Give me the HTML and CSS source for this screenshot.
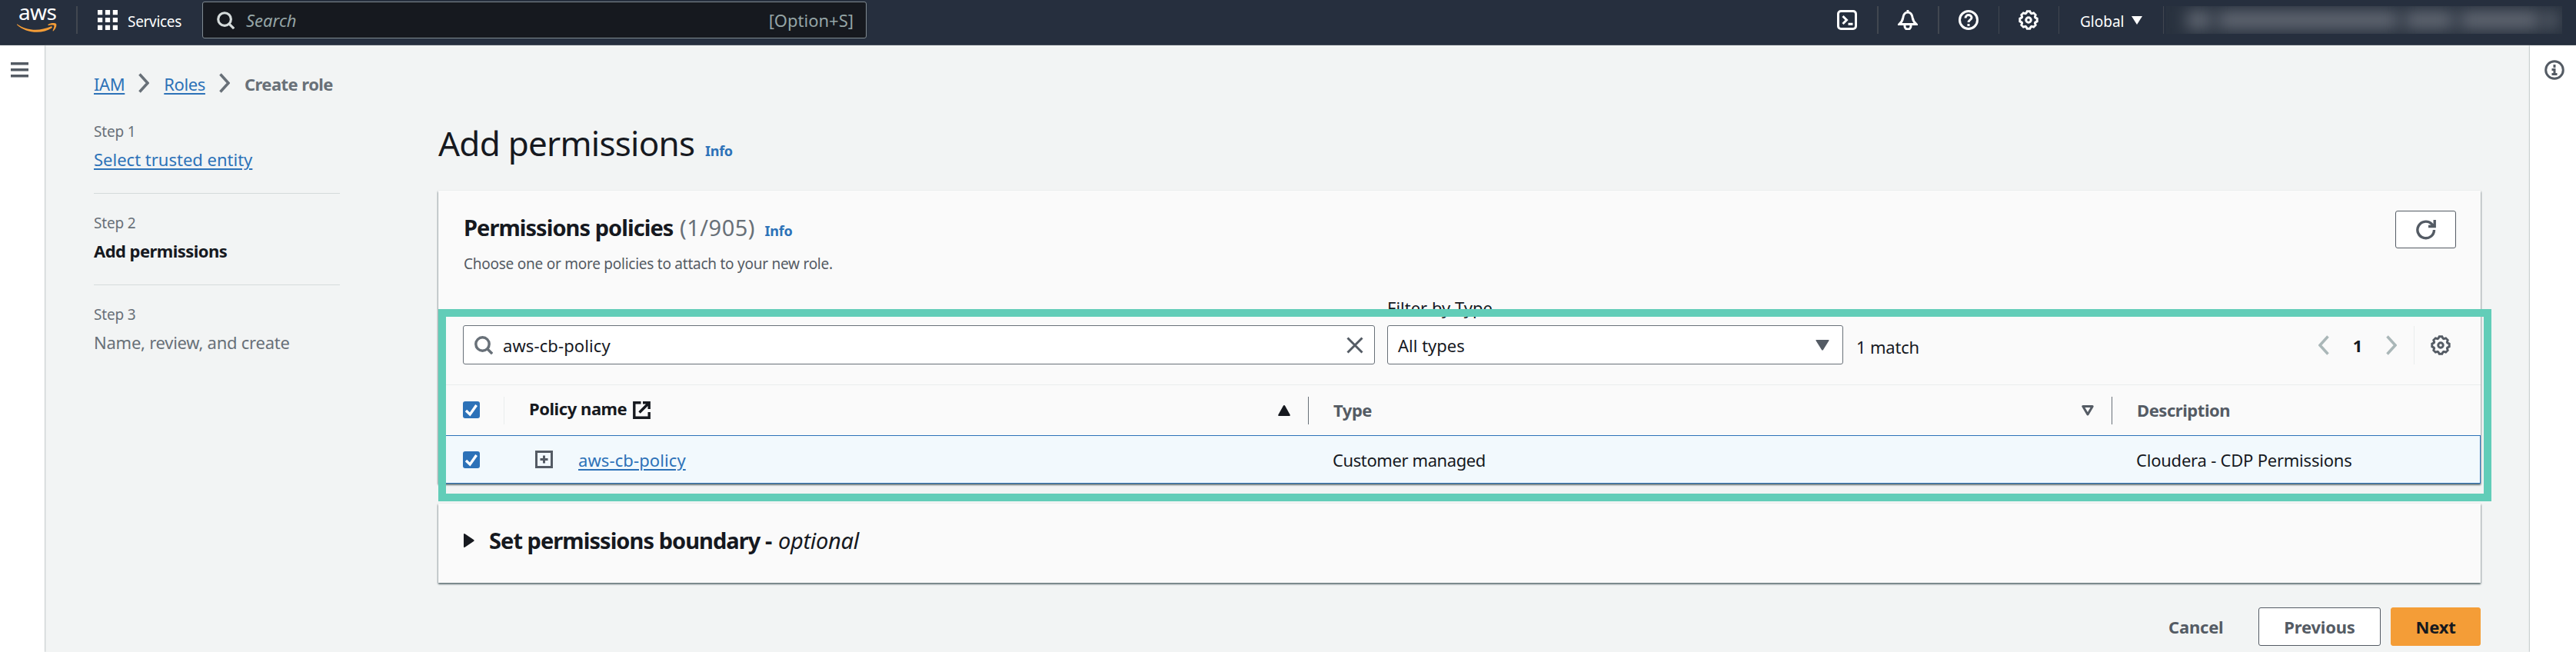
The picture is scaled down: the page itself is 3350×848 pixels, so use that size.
FILE: index.html
```html
<!DOCTYPE html>
<html lang="en">
<head>
    <meta charset="UTF-8">
    <meta name="viewport" content="width=device-width, initial-scale=1.0">
    <title>Create role | IAM</title>
    <link rel="stylesheet" href="styles.css">
</head>
<body>
    <!-- Shared icons -->
    <svg class="sprite" aria-hidden="true">
        <symbol id="gear" viewBox="-8 -8 16 16">
            <path d="M6.9-1.1v2.2L5.4 1.9l-.24.57.5 1.63L4.1 5.66l-1.63-.5-.57.24L1.1 6.9h-2.2l-.8-1.5-.57-.24-1.63.5L-5.66 4.1l.5-1.63L-5.4 1.9l-1.5-.8v-2.2l1.5-.8.24-.57-.5-1.63L-4.1-5.66l1.63.5.57-.24.8-1.5h2.2l.8 1.5.57.24 1.63-.5L5.66-4.1l-.5 1.63.24.57z"/>
            <circle r="2"/>
        </symbol>
        <symbol id="search" viewBox="0 0 16 16">
            <circle cx="7" cy="7" r="5.8"/>
            <path d="M11 11l4.4 4.4"/>
        </symbol>
        <symbol id="chevron" viewBox="0 0 14 26">
            <path d="M1.5 1.5L12 13 1.5 24.5"/>
        </symbol>
        <symbol id="check" viewBox="0 0 22 22">
            <path d="M4 12l5.2 5L17.6 5"/>
        </symbol>
    </svg>

    <header class="topbar">
        <div class="logo">
            <span class="logo-text">aws</span>
            <svg class="logo-smile" viewBox="0 0 52 12">
                <path d="M0 1.2c14 9.5 30 9.300 44 3.300 1.500-.6 2.600 1 1.200 2C33 14.500 12 13.500 0 2.200z"/>
                <path d="M40.500 2c3-2.200 9-2.500 10.500-1 1.200 1.500-.5 7-3.500 9.200-.8.500-1.100 0-.8-.8 1-2.600 2.200-5.400 1.500-6.200-.8-.9-4-.6-7-.2-.9.100-1.300-.5-.7-1z"/>
            </svg>
        </div>
        <span class="divider thick"></span>
        <div class="services">
            <svg class="icon grid-icon" viewBox="0 0 25 25">
                <path d="M0 0h6v6H0zM9.500 0h6v6h-6zM19 0h6v6h-6zM0 9.500h6v6H0zM9.500 9.500h6v6h-6zM19 9.500h6v6h-6zM0 19h6v6H0zM9.500 19h6v6h-6zM19 19h6v6h-6z"/>
            </svg>
            <span>Services</span>
        </div>
        <div class="global-search">
            <svg class="icon line"><use href="#search"/></svg>
            <span class="placeholder">Search</span>
            <span>[Option+S]</span>
        </div>
        <nav class="tools">
            <svg class="icon line" viewBox="0 0 26 26">
                <rect x="1.5" y="1.5" width="23" height="23" rx="3.5"/>
                <path d="M7.500 8l5 5-5 5M14.500 18.200h6"/>
            </svg>
            <span class="divider thick"></span>
            <svg class="icon line" viewBox="0 0 26 26">
                <path d="M13 0v3M2 18.500h22c-3-2.500-4.200-4.500-4.800-8.500C18.700 5.600 16 3 13 3s-5.700 2.600-6.200 7C6.200 14 5 16 2 18.500zM9 19v2a4 4 0 0 0 8 0v-2"/>
            </svg>
            <span class="divider thick"></span>
            <svg class="icon line" viewBox="0 0 26 26">
                <circle cx="13" cy="13" r="11.5"/>
                <path d="M9 10.500c0-5.200 8-5 8-.5 0 3-4 2.800-4 6M13 18v3"/>
            </svg>
            <span class="divider"></span>
            <svg class="icon line gear"><use href="#gear"/></svg>
            <span class="divider"></span>
            <div class="region"><span>Global</span> <svg viewBox="0 0 14 11"><path d="M0 0h14L7 11z"/></svg></div>
            <span class="divider"></span>
            <div class="account">
                <i class="w1"></i><i class="w2"></i><i class="w3"></i><i class="w4"></i><i class="w5"></i>
            </div>
        </nav>
    </header>

    <div class="layout">
        <aside class="panel left">
            <svg class="menu-icon" viewBox="0 0 23 20"><path d="M0 1.700h23M0 9.700h23M0 17.700h23"/></svg>
        </aside>

        <main>
            <nav class="breadcrumbs">
                <a>IAM</a>
                <svg><use href="#chevron"/></svg>
                <a>Roles</a>
                <svg><use href="#chevron"/></svg>
                <b>Create role</b>
            </nav>

            <div class="wizard">
                <ol class="steps">
                    <li>
                        <small>Step 1</small>
                        <a>Select trusted entity</a>
                    </li>
                    <li>
                        <small>Step 2</small>
                        <b>Add permissions</b>
                    </li>
                    <li>
                        <small>Step 3</small>
                        <span class="upcoming">Name, review, and create</span>
                    </li>
                </ol>

                <div class="content">
                    <h1>Add permissions <a class="info">Info</a></h1>

                    <section class="card">
                        <div class="card-header">
                            <div>
                                <h2>Permissions policies <span class="counter">(1/905)</span> <a class="info">Info</a></h2>
                                <p>Choose one or more policies to attach to your new role.</p>
                            </div>
                            <button class="btn refresh">
                                <svg viewBox="0 0 26 26"><path d="M23.500 13A10.800 10.800 0 1 1 20 5l3 3.500M24.200 0v8.500H16"/></svg>
                            </button>
                        </div>

                        <div class="toolbar">
                            <div class="field filter">
                                <svg class="icon line"><use href="#search"/></svg>
                                <span>aws-cb-policy</span>
                                <svg class="clear" viewBox="0 0 22 22"><path d="M1.500 1.500l19 19M20.500 1.500l-19 19"/></svg>
                            </div>
                            <div class="select">
                                <label>Filter by Type</label>
                                <div class="field">
                                    <span>All types</span>
                                    <svg viewBox="0 0 18 14"><path d="M1 0h16q1 0 .5 1L10 13q-1 1.500-2 0L.5 1Q0 0 1 0z"/></svg>
                                </div>
                            </div>
                            <span class="matches">1 match</span>
                            <div class="pages">
                                <svg class="prev"><use href="#chevron"/></svg>
                                <b>1</b>
                                <svg><use href="#chevron"/></svg>
                            </div>
                            <span class="rule"></span>
                            <svg class="icon line gear"><use href="#gear"/></svg>
                        </div>

                        <div class="row head">
                            <div class="cell pick"><span class="checkbox"><svg><use href="#check"/></svg></span></div>
                            <div class="cell name">
                                <span>Policy name</span>
                                <svg class="external" viewBox="0 0 23 23"><path d="M10.500 1.800H1.800v19.400h19.400V14M8.500 14.500L20.500 2.500M13 1.800h8.200V10"/></svg>
                                <svg class="sort" viewBox="0 0 16 14"><path d="M8 0q.8 0 1.300 1l6.400 11.500q.5 1.500-.9 1.500H1.200q-1.400 0-.9-1.500L6.700 1Q7.200 0 8 0z"/></svg>
                            </div>
                            <div class="cell type">
                                <span>Type</span>
                                <svg class="sort open" viewBox="0 0 16 14"><path d="M1.800 1.500h12.400L8 12z"/></svg>
                            </div>
                            <div class="cell"><span>Description</span></div>
                        </div>
                        <div class="row selected">
                            <div class="cell pick"><span class="checkbox"><svg><use href="#check"/></svg></span></div>
                            <div class="cell name">
                                <svg class="expand" viewBox="0 0 23 23"><path d="M1.500 1.500h20v20h-20zM11.500 6.500v10M6.500 11.500h10"/></svg>
                                <a>aws-cb-policy</a>
                            </div>
                            <div class="cell type">Customer managed</div>
                            <div class="cell description">Cloudera - CDP Permissions</div>
                        </div>
                    </section>

                    <section class="card boundary">
                        <svg viewBox="0 0 14 18"><path d="M0 1q0-1.500 1.500-.7L13 8q1.300 1 0 2L1.500 17.700Q0 18.500 0 17z"/></svg>
                        <h2>Set permissions boundary - <em>optional</em></h2>
                    </section>

                    <div class="actions">
                        <button class="btn plain">Cancel</button>
                        <button class="btn">Previous</button>
                        <button class="btn primary">Next</button>
                    </div>

                    <div class="highlight"></div>
                </div>
            </div>
        </main>

        <aside class="panel right">
            <svg class="info-icon" viewBox="0 0 26 26">
                <circle cx="13" cy="13" r="11.3"/>
                <path d="M13 6v4M9.500 12.500H13v6M9.500 18.500h7"/>
            </svg>
        </aside>
    </div>
</body>
</html>
```

FILE: styles.css
```css
* {
    box-sizing: border-box;
}
body {
    margin: 0;
    height: 848px;
    overflow: hidden;
    background: #f2f4f4;
    color: #16191f;
    font-family: "Noto Sans", "Open Sans", sans-serif;
    font-size: 22px;
    line-height: 30px;
}
h1, h2, p, ol {
    margin: 0;
    padding: 0;
}
a {
    color: #2d72b8;
    text-decoration: underline;
    text-decoration-thickness: 2px;
    text-underline-offset: 3px;
}
svg {
    display: block;
    flex: none;
    fill: currentColor;
}
.sprite {
    position: absolute;
    width: 0;
    height: 0;
}
.icon {
    width: 26px;
    height: 26px;
}
.line {
    fill: none;
    stroke: currentColor;
    stroke-width: 3;
}
.line.gear {
    stroke-width: 1.8;
}

/* Top bar */
.topbar {
    display: flex;
    align-items: flex-start;
    height: 59px;
    background: #262f3e;
    border-bottom: 1px solid #48505b;
    color: #fff;
    font-size: 19px;
}
.divider {
    width: 1px;
    height: 36px;
    margin-top: 8px;
    background: #414750;
}
.divider.thick {
    width: 2px;
}
.logo {
    width: 77px;
    height: 44px;
    padding-left: 22px;
    margin-right: 22px;
}
.logo-text {
    display: block;
    height: 30px;
    padding-left: 2px;
    font-size: 28px;
    line-height: 31px;
    letter-spacing: -0.6px;
}
.logo-smile {
    width: 52px;
    height: 12px;
    color: #f49d37;
}
.services {
    display: flex;
    align-items: center;
    height: 52px;
    width: 162px;
    padding-left: 26px;
    gap: 13px;
    letter-spacing: -0.3px;
}
.services span, .region span {
    padding-top: 3px;
}
.global-search {
    display: flex;
    align-items: center;
    width: 864px;
    height: 48px;
    margin-top: 2px;
    padding: 0 16px 0 18px;
    background: #16191f;
    border: 1px solid #7f8a91;
    border-radius: 3px;
    color: #95a5a6;
    font-size: 22px;
}
.global-search .icon {
    width: 23px;
    height: 23px;
    margin-right: 15px;
    color: #d5dbdb;
    stroke-width: 2.2;
}
.placeholder {
    flex: 1;
    font-style: italic;
}
.tools {
    display: flex;
    margin-left: auto;
    margin-right: 18px;
}
.tools .icon {
    margin: 13px 26px 0 25px;
}
.region {
    display: flex;
    align-items: center;
    height: 52px;
    width: 135px;
    padding-left: 27px;
    gap: 10px;
}
.region svg {
    width: 14px;
    height: 11px;
}
.account {
    display: flex;
    align-items: center;
    gap: 8px;
    width: 515px;
    height: 36px;
    margin: 8px 0 0 3px;
    padding-left: 27px;
    background: #29323f;
    overflow: hidden;
}
.account i {
    height: 22px;
    background: #656b76;
    filter: blur(10px);
}
.w1 { width: 32px; }
.w2 { width: 235px; }
.w3 { width: 64px; }
.w4 { width: 104px; }
.w5 { width: 14px; }

/* Page frame */
.layout {
    display: flex;
    height: 789px;
}
.panel {
    width: 58px;
    background: #fff;
    color: #545b64;
    box-shadow: 0 0 2px rgba(0, 28, 36, 0.5);
}
.panel.right {
    width: 60px;
    padding: 19px 0 0 19px;
}
.panel.left {
    padding: 22px 0 0 14px;
}
.menu-icon {
    width: 23px;
    height: 20px;
    stroke: currentColor;
    stroke-width: 3.4;
}
.info-icon {
    width: 26px;
    height: 26px;
    fill: none;
    stroke: currentColor;
    stroke-width: 3;
}
main {
    flex: 1;
    padding: 35px 64px 0;
}
.breadcrumbs {
    display: flex;
    height: 30px;
    color: #687078;
}
.breadcrumbs a {
    letter-spacing: -0.4px;
}
.breadcrumbs svg, .pages svg {
    width: 14px;
    height: 26px;
    fill: none;
    stroke: currentColor;
    stroke-width: 3.5;
}
.breadcrumbs svg {
    margin: 1px 19px 0 18px;
}
.breadcrumbs b {
    letter-spacing: -0.55px;
}
.wizard {
    display: flex;
    gap: 128px;
}
.steps {
    width: 320px;
    padding-top: 34px;
    list-style: none;
    color: #687078;
}
.steps li {
    display: flex;
    flex-direction: column;
    align-items: flex-start;
    height: 94px;
    margin-bottom: 25px;
    border-bottom: 1px solid #d5dbdb;
}
.steps li:last-child {
    border: 0;
}
.steps b {
    color: #16191f;
    letter-spacing: -0.55px;
}
.upcoming {
    letter-spacing: -0.25px;
}
small {
    margin-bottom: 8px;
    font-size: 19px;
    line-height: 26px;
    letter-spacing: -0.2px;
}

/* Content */
.content {
    position: relative;
    flex: 1;
    padding-top: 32px;
}
h1 {
    height: 60px;
    margin-bottom: 32px;
    font-size: 44px;
    font-weight: 400;
    line-height: 60px;
    letter-spacing: -0.75px;
}
.info {
    margin-left: 3px;
    font-size: 18px;
    font-weight: 700;
    letter-spacing: -0.3px;
    text-decoration: none;
}
.card {
    background: #fafafa;
    box-shadow: 0 2px 2px rgba(0, 28, 36, 0.45), 1px 1px 2px rgba(0, 28, 36, 0.2), -1px 1px 2px rgba(0, 28, 36, 0.2);
}
.card-header {
    display: flex;
    justify-content: space-between;
    height: 108px;
    padding: 26px 32px 0 33px;
}
h2 {
    height: 40px;
    margin: 2px 0 14px;
    font-size: 29px;
    line-height: 40px;
    letter-spacing: -0.95px;
}
.counter {
    margin-left: 2px;
    font-weight: 400;
    letter-spacing: 0.5px;
    color: #687078;
}
h2 .info {
    margin-left: 6px;
}
.card-header p {
    color: #545b64;
    font-size: 19px;
    line-height: 26px;
    letter-spacing: -0.25px;
}
.btn {
    height: 50px;
    padding: 0;
    background: #fff;
    border: 1.5px solid #545b64;
    border-radius: 3px;
    color: #545b64;
    font: inherit;
    font-weight: 700;
    letter-spacing: -0.2px;
}
.refresh {
    display: flex;
    align-items: center;
    justify-content: center;
    width: 79px;
    height: 49px;
}
.refresh svg {
    width: 26px;
    height: 26px;
    fill: none;
    stroke: currentColor;
    stroke-width: 3.4;
}
.toolbar {
    display: flex;
    align-items: flex-end;
    height: 118px;
    margin-top: 26px;
    padding: 0 39px 26px 32px;
}
.field {
    display: flex;
    align-items: center;
    height: 51px;
    padding: 0 14px;
    background: #fff;
    border: 1px solid #687078;
    border-radius: 3px;
}
.filter {
    width: 1186px;
    margin-right: 16px;
}
.filter .icon {
    width: 24px;
    height: 24px;
    margin-right: 13px;
    color: #687078;
    stroke-width: 2.3;
}
.filter span {
    letter-spacing: 0.1px;
}
.clear {
    width: 22px;
    height: 22px;
    margin-left: auto;
    color: #545b64;
    stroke: currentColor;
    stroke-width: 3;
}
.select {
    width: 593px;
}
.select label {
    display: inline-block;
    margin-bottom: 8px;
}
.select .field {
    padding-left: 13px;
}
.select svg {
    width: 18px;
    height: 14px;
    margin-left: auto;
    margin-right: 3px;
    color: #545b64;
}
.matches {
    margin: 0 auto 8px 17px;
    letter-spacing: -0.2px;
}
.pages {
    display: flex;
    align-items: center;
    height: 51px;
}
.pages svg {
    color: #aab7b8;
}
.pages .prev {
    transform: scaleX(-1);
}
.pages b {
    width: 74px;
    text-align: center;
}
.rule {
    width: 1px;
    height: 50px;
    margin: 0 21px 0 22px;
    background: #eaeded;
}
.toolbar > .gear {
    margin-bottom: 12px;
    color: #545b64;
}

/* Policies table */
.row {
    display: flex;
    align-items: center;
    height: 66px;
    border-top: 1px solid #eaeded;
}
.row.selected {
    height: 63px;
    background: #f2f9fd;
    border: 1.5px solid #2d72b8;
    border-left: 0;
}
.head {
    color: #545b64;
    font-weight: 700;
    letter-spacing: -0.45px;
}
.head .cell span {
    margin-bottom: 2px;
}
.cell {
    display: flex;
    align-items: center;
    height: 36px;
    padding-left: 32px;
}
.head .cell + .cell {
    border-left: 1px solid #687078;
}
.head .cell.name {
    border-left-color: #eaeded;
    color: #16191f;
}
.head .cell.name span {
    margin-bottom: 5px;
}
.pick {
    width: 85px;
}
.name {
    width: 1046px;
}
.name a {
    letter-spacing: 0.1px;
}
.type {
    width: 1045px;
}
.selected .type {
    letter-spacing: -0.4px;
}
.description {
    letter-spacing: -0.22px;
}
.checkbox {
    width: 22px;
    height: 22px;
    background: #2d72b8;
    border-radius: 3px;
}
.checkbox svg {
    width: 22px;
    height: 22px;
    fill: none;
    stroke: #fff;
    stroke-width: 3.4;
}
.external {
    width: 23px;
    height: 23px;
    margin: 0 0 1px 8px;
    fill: none;
    stroke: currentColor;
    stroke-width: 3.4;
}
.sort {
    width: 16px;
    height: 14px;
    margin-left: auto;
    margin-right: 23px;
}
.sort.open {
    fill: none;
    stroke: currentColor;
    stroke-width: 3;
    stroke-linejoin: round;
}
.expand {
    width: 23px;
    height: 23px;
    margin: 0 33px 0 9px;
    fill: none;
    stroke: #545b64;
    stroke-width: 3;
}

.boundary {
    display: flex;
    align-items: center;
    gap: 19px;
    height: 103px;
    margin-top: 26px;
    padding: 0 0 7px 33px;
}
.boundary svg {
    width: 14px;
    height: 18px;
}
.boundary h2 {
    margin: 0;
}
em {
    margin-left: 2px;
    font-weight: 400;
    letter-spacing: -0.3px;
}
.actions {
    display: flex;
    justify-content: flex-end;
    margin-top: 32px;
}
.actions .btn {
    width: 159px;
    margin-right: 13px;
}
.actions .plain {
    width: 71px;
    margin-right: 46px;
    background: none;
    border: 0;
}
.actions .primary {
    width: 117px;
    margin-right: 0;
    background: #f49d37;
    border-color: #f49d37;
    color: #16191f;
}

/* Frame drawn over the filter and the table */
.highlight {
    position: absolute;
    top: 278px;
    left: 0;
    width: 2670px;
    height: 250px;
    border: 10px solid #62cdb8;
}
```
